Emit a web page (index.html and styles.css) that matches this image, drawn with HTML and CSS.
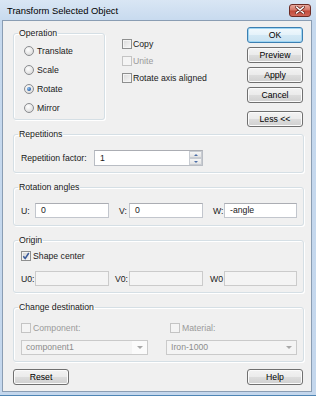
FILE: index.html
```html
<!DOCTYPE html>
<html lang="en">
<head>
  <meta charset="UTF-8" />
  <title>Transform Selected Object</title>
  <link rel="stylesheet" href="styles.css">
</head>
<body>
  <div class="window">
    <div class="titlebar">
      <span class="title">Transform Selected Object</span>
      <span class="close-btn">
        <svg width="10" height="8" viewBox="0 0 10 8">
          <path d="M1.5 1 L8.5 7 M8.5 1 L1.5 7" stroke="#6b2a22" stroke-width="3" stroke-linecap="round" />
          <path d="M1.5 1 L8.5 7 M8.5 1 L1.5 7" stroke="#fff" stroke-width="1.6" stroke-linecap="round" />
        </svg>
      </span>
    </div>

    <div class="client">
      <div class="top-row">
        <fieldset class="group op-group">
          <legend>Operation</legend>
          <div class="group-body">
            <label class="radio-row"><span class="radio"></span>Translate</label>
            <label class="radio-row"><span class="radio"></span>Scale</label>
            <label class="radio-row"><span class="radio checked"></span>Rotate</label>
            <label class="radio-row"><span class="radio"></span>Mirror</label>
          </div>
        </fieldset>

        <div class="options">
          <label class="check-row"><span class="check"></span>Copy</label>
          <label class="check-row disabled"><span class="check"></span>Unite</label>
          <label class="check-row"><span class="check"></span>Rotate axis aligned</label>
        </div>

        <div class="buttons">
          <button class="btn default">OK</button>
          <button class="btn">Preview</button>
          <button class="btn">Apply</button>
          <button class="btn">Cancel</button>
          <button class="btn less">Less &lt;&lt;</button>
        </div>
      </div>

      <fieldset class="group rep-group">
        <legend>Repetitions</legend>
        <div class="group-body rep-row">
          <span class="rep-label">Repetition factor:</span>
          <div class="spin">
            <span class="spin-value">1</span>
            <span class="spin-btns">
              <span class="spin-btn"><span class="arrow-up"></span></span>
              <span class="spin-btn"><span class="arrow-down"></span></span>
            </span>
          </div>
        </div>
      </fieldset>

      <fieldset class="group rot-group">
        <legend>Rotation angles</legend>
        <div class="group-body coord-row">
          <span class="coord-label">U:</span>
          <span class="field">0</span>
          <span class="coord-label">V:</span>
          <span class="field">0</span>
          <span class="coord-label">W:</span>
          <span class="field">-angle</span>
        </div>
      </fieldset>

      <fieldset class="group origin-group">
        <legend>Origin</legend>
        <div class="group-body">
          <label class="check-row"><span class="check checked">
            <svg width="8" height="8" viewBox="0 0 8 8">
              <path d="M1.3 4.2 L3.2 6.4 L6.8 1" fill="none" stroke="#3a5a9a" stroke-width="1.5" />
            </svg>
          </span>Shape center</label>
          <div class="coord-row origin-row">
            <span class="coord-label">U0:</span>
            <span class="field off"></span>
            <span class="coord-label">V0:</span>
            <span class="field off"></span>
            <span class="coord-label">W0</span>
            <span class="field off"></span>
          </div>
        </div>
      </fieldset>

      <fieldset class="group dest-group">
        <legend>Change destination</legend>
        <div class="group-body dest-grid">
          <label class="check-row disabled"><span class="check"></span>Component:</label>
          <label class="check-row disabled mat"><span class="check"></span>Material:</label>
          <div class="combo edit">
            <span class="combo-text">component1</span>
            <span class="combo-arrow"><span class="arrow-down gray"></span></span>
          </div>
          <div class="combo">
            <span class="combo-text">Iron-1000</span>
            <span class="combo-arrow"><span class="arrow-down gray"></span></span>
          </div>
        </div>
      </fieldset>

      <div class="bottom-row">
        <button class="btn">Reset</button>
        <button class="btn">Help</button>
      </div>
    </div>
  </div>
</body>
</html>
```

FILE: styles.css
```css
* {
  margin: 0;
  padding: 0;
  box-sizing: border-box;
}

body {
  width: 316px;
  height: 396px;
  overflow: hidden;
  font-family: "Liberation Sans", Arial, sans-serif;
  font-size: 8.7px;
  color: #1a1a1a;
  background: #c4d7ed;
}

.window {
  width: 316px;
  height: 396px;
  display: flex;
  flex-direction: column;
  padding: 0 4px 3px 2px;
  background: linear-gradient(#d9e6f4, #c6d9ee 22px, #c4d7ed);
  border-bottom: 1px solid #4f86b5;
}

/* title bar */
.titlebar {
  height: 20px;
  display: flex;
  align-items: center;
  justify-content: space-between;
  padding-left: 5px;
}

.title {
  font-size: 9.4px;
  color: #000;
  margin-top: 1px;
}

.close-btn {
  width: 22px;
  height: 13px;
  margin-right: 1px;
  border: 1px solid #6d2b24;
  border-radius: 3px;
  background: linear-gradient(#e9a99c, #d47768 45%, #c24a3a 55%, #d0685a);
  display: flex;
  align-items: center;
  justify-content: center;
}

/* client area */
.client {
  flex: 1;
  background: #f0f0f0;
  border: 1px solid #8a9db3;
  padding: 6px 7px 0 10px;
  display: flex;
  flex-direction: column;
}

.top-row {
  display: grid;
  grid-template-columns: 92px 1fr 56px;
  align-items: start;
  margin-right: 1px;
}

/* group boxes */
.group {
  border: 1px solid #d5dfe5;
  border-radius: 3px;
  box-shadow: 1px 1px 0 #fff, inset 1px 1px 0 #fff;
  padding: 0;
}

.group legend {
  margin-left: 4px;
  padding: 0 1px;
  line-height: 11px;
}

.group-body {
  margin-left: 7px;
}

.op-group {
  margin-top: 1px;
  padding: 2px 0;
}

.op-group .group-body {
  margin-left: 10px;
}

.radio-row {
  height: 19px;
  display: flex;
  align-items: center;
  gap: 3px;
}

.radio {
  width: 10px;
  height: 10px;
  border-radius: 50%;
  border: 1px solid #8a8c8f;
  background: radial-gradient(circle at 40% 35%, #ffffff, #e4e4e4 60%, #cfcfcf);
  display: flex;
  align-items: center;
  justify-content: center;
}

.radio.checked::after {
  content: "";
  width: 4px;
  height: 4px;
  border-radius: 50%;
  background: radial-gradient(circle at 35% 35%, #8fc0ef, #2a62a8 70%, #1b4a86);
}

/* checkboxes */
.options {
  padding: 8px 0 0 17px;
}

.check-row {
  height: 17px;
  display: flex;
  align-items: center;
  gap: 1px;
}

.check {
  width: 10px;
  height: 10px;
  border: 1px solid #8e8f8f;
  background: linear-gradient(135deg, #dadada, #f7f7f7);
  box-shadow: inset 0 0 0 1px #f4f4f4;
  display: flex;
  align-items: center;
  justify-content: center;
}

.check-row.disabled {
  color: #9a9a9a;
}

.check-row.disabled .check {
  border-color: #c4c4c4;
  background: #f4f4f4;
  box-shadow: none;
}

/* push buttons */
.buttons {
  display: flex;
  flex-direction: column;
  gap: 4px;
}

.btn {
  width: 56px;
  height: 16px;
  font: inherit;
  color: #000;
  border: 1px solid #707070;
  border-radius: 3px;
  background: linear-gradient(#f3f3f3, #ebebeb 50%, #dddddd 50%, #d0d0d0);
  box-shadow: inset 0 0 0 1px #fbfbfb;
}

.btn.default {
  border-color: #3c7fb1;
  background: linear-gradient(#f2f9fd, #e4f2fa 50%, #d4e9f5 50%, #c9e2f1);
  box-shadow: inset 0 0 0 1px #9fd6f4;
}

.btn.less {
  margin-top: 4px;
}

/* repetitions */
.rep-group {
  margin-top: 2px;
  padding: 10px 0 6px;
}

.rep-row {
  display: flex;
  align-items: center;
}

.rep-label {
  width: 73px;
}

.spin {
  width: 109px;
  height: 16px;
  display: flex;
  background: #fff;
  border: 1px solid #b9bdc4;
  border-top-color: #abadb3;
}

.spin-value {
  flex: 1;
  padding-left: 5px;
  line-height: 14px;
}

.spin-btns {
  width: 13px;
  display: flex;
  flex-direction: column;
}

.spin-btn {
  flex: 1;
  border: 1px solid #c8ccd2;
  background: linear-gradient(#f6f6f6, #e2e2e2);
  display: flex;
  align-items: center;
  justify-content: center;
}

.arrow-up {
  border-left: 2px solid transparent;
  border-right: 2px solid transparent;
  border-bottom: 2px solid #4c6ea8;
}

.arrow-down {
  border-left: 2px solid transparent;
  border-right: 2px solid transparent;
  border-top: 2px solid #4c6ea8;
}

.arrow-down.gray {
  border-left-width: 3px;
  border-right-width: 3px;
  border-top: 3px solid #a8a8a8;
}

/* coordinate rows */
.rot-group {
  margin-top: 9px;
  padding: 10px 0 7px;
}

.coord-row {
  display: grid;
  grid-template-columns: 14px 74px 20px 74px 21px 73px;
  align-items: center;
}

.coord-label:nth-child(3),
.coord-label:nth-child(5) {
  padding-left: 10px;
}

.origin-row .coord-label:nth-child(3),
.origin-row .coord-label:nth-child(5) {
  padding-left: 0;
  padding-right: 1px;
  text-align: right;
}

.field {
  height: 15px;
  padding-left: 5px;
  line-height: 13px;
  background: #fff;
  border: 1px solid #c2c6cd;
  border-top-color: #abadb3;
}

.field.off {
  background: #f4f4f4;
  border-color: #cbcbcb;
}

.origin-group {
  margin-top: 9px;
  padding: 4px 0 6px;
}

.origin-group .check-row {
  height: 12px;
  gap: 2px;
}

.origin-group .check {
  background: linear-gradient(135deg, #d2d2d2, #f4f4f4);
}

.origin-row {
  margin-top: 9px;
}

/* change destination */
.dest-group {
  margin-top: 9px;
  padding: 9px 0 6px;
}

.dest-grid {
  display: grid;
  grid-template-columns: 127px 131px;
  column-gap: 18px;
  row-gap: 6px;
}

.dest-grid .check-row {
  height: 12px;
  gap: 2px;
}

.check-row.mat {
  margin-left: 4px;
}

.combo {
  height: 15px;
  display: flex;
  background: #f4f4f4;
  border: 1px solid #cacaca;
  color: #8c8c8c;
}

.combo-text {
  flex: 1;
  padding-left: 4px;
  line-height: 13px;
}

.combo-arrow {
  width: 15px;
  display: flex;
  align-items: center;
  justify-content: center;
}

.combo.edit .combo-arrow {
  background: #fbfbfb;
}

.bottom-row {
  margin-top: 7px;
  display: flex;
  justify-content: space-between;
  margin-right: 1px;
}
```
